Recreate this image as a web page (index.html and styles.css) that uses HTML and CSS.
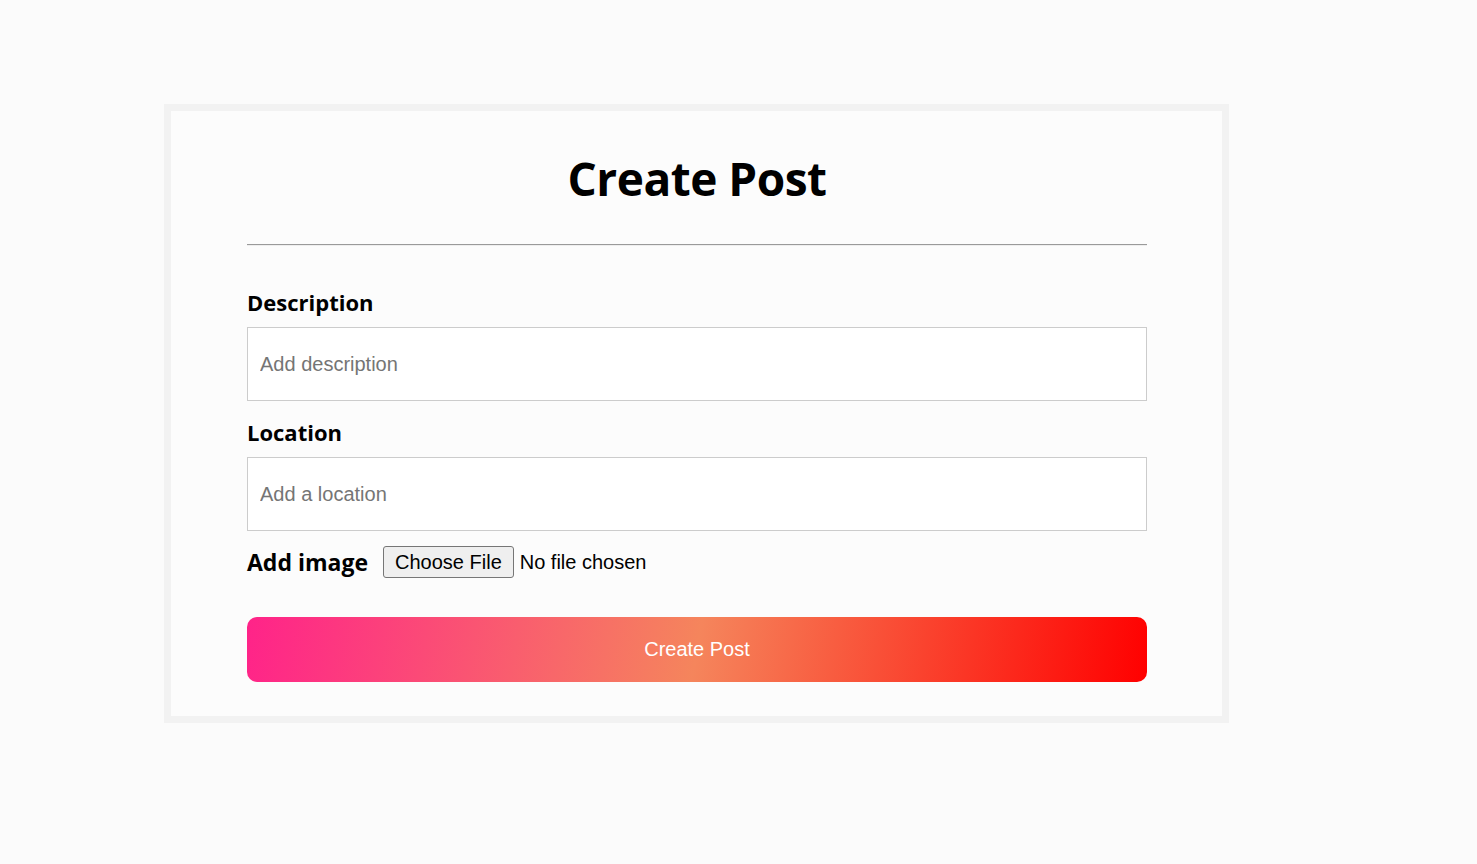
FILE: index.html
```html
<!DOCTYPE html>
<html lang="en">
<head>
<meta charset="utf-8">
<title>Create Post</title>
<link rel="stylesheet" href="styles.css">
</head>
<body>
  <main class="card">
    <h1 class="title">Create Post</h1>
    <hr class="divider">
    <form class="form">
      <label class="label" for="desc">Description</label>
      <input class="field" id="desc" type="text" placeholder="Add description">
      <label class="label" for="loc">Location</label>
      <input class="field" id="loc" type="text" placeholder="Add a location">
      <div class="image-row">
        <label class="label label-inline" for="img">Add image</label>
        <input class="file" id="img" type="file">
      </div>
      <button class="submit" type="button">Create Post</button>
    </form>
  </main>
</body>
</html>
```
FILE: styles.css
```css
html, body {
  margin: 0;
  padding: 0;
  background: #fbfbfb;
}

body {
  padding: 104px 0 0 164px;
  font-family: "Liberation Sans", Arial, sans-serif;
}

.card {
  width: 900px;
  padding: 0 75px 34px 76px;
  border: 7px solid #f2f2f2;
  background: #fcfcfc;
  display: flex;
  flex-direction: column;
}

.title {
  margin: 35px 0 0;
  font-family: "Open Sans", "Noto Sans", sans-serif;
  font-weight: 700;
  font-size: 46px;
  line-height: 64px;
  letter-spacing: -0.5px;
  text-align: center;
  color: #000;
}

.divider {
  margin: 34px 0 0;
  border: 0;
  border-top: 1px solid #9a9a9a;
  border-bottom: 1px solid #eeeeee;
  height: 0;
}

.form {
  display: flex;
  flex-direction: column;
}

.label {
  font-family: "Open Sans", "Noto Sans", sans-serif;
  font-weight: 700;
  font-size: 22px;
  line-height: 30px;
  color: #000;
  margin-top: 41px;
  margin-bottom: 10px;
}

.field + .label {
  margin-top: 16px;
}

.field {
  box-sizing: border-box;
  height: 74px;
  width: 100%;
  margin: 0;
  padding: 0 12px;
  border: 1px solid #cccccc;
  background: #fff;
  font-family: "Liberation Sans", Arial, sans-serif;
  font-size: 20px;
  color: #000;
  outline: none;
}

.field::placeholder {
  color: #757575;
}

.image-row {
  display: flex;
  align-items: center;
  gap: 15px;
  margin-top: 15px;
  height: 32px;
}

.label-inline {
  margin: 0;
  font-size: 23px;
}

.file {
  font-family: "Liberation Sans", Arial, sans-serif;
  font-size: 20px;
  color: #000;
}

.file::file-selector-button {
  box-sizing: border-box;
  height: 32px;
  font-family: "Liberation Sans", Arial, sans-serif;
  font-size: 20px;
  padding: 0 11px;
  margin-right: 6px;
  border: 1px solid #767676;
  border-radius: 3px;
  background: #efefef;
  color: #000;
}

.submit {
  margin-top: 39px;
  height: 65px;
  border: 0;
  border-radius: 10px;
  background: linear-gradient(100deg, #ff2389 0%, #f5855c 50%, #ff0000 100%);
  color: #fff;
  font-family: "Liberation Sans", Arial, sans-serif;
  font-size: 20px;
  cursor: pointer;
}
```
